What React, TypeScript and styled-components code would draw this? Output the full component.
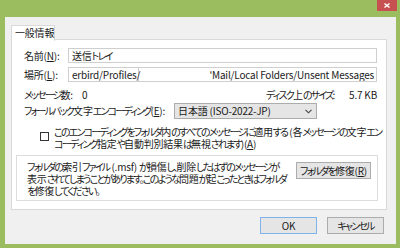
import React from "react";
import styled, { createGlobalStyle } from "styled-components";

const Global = createGlobalStyle`
  html, body { margin: 0; padding: 0; }
  body {
    background: #9bbd5f;
    font-family: "Noto Sans CJK JP", "Noto Sans", sans-serif;
    font-size: 10px;
    line-height: 12px;
    letter-spacing: -0.2px;
    color: #1a1a1a;
    font-feature-settings: "palt";
  }
  * { box-sizing: border-box; }
`;

/* Meiryo UI draws kana narrower than kanji: tighten kana runs only */
const KanaRun = styled.span`
  letter-spacing: -1.8px;
`;

function jp(s: string) {
  return s
    .split(/([\u3000-\u30ff\uff00-\uffef]+)/)
    .map((p, i) =>
      i % 2 === 1 ? <KanaRun key={i}>{p}</KanaRun> : p ? <React.Fragment key={i}>{p}</React.Fragment> : null
    );
}

const Frame = styled.div`
  position: relative;
  width: 400px;
  height: 248px;
  background: #9bbd5f;
  padding: 17px 4px 4px 5px;
`;

const CloseBtn = styled.div`
  position: absolute;
  top: 0;
  left: 377px;
  width: 20px;
  height: 11px;
  background: #c75050;
  display: flex;
  align-items: center;
  justify-content: center;
`;

const Client = styled.div`
  height: 227px;
  background: #f0f0f0;
  padding: 8px 9px 0 6px;
  display: flex;
  flex-direction: column;
`;

const TabStrip = styled.div`
  display: flex;
  height: 15px;
  position: relative;
  z-index: 1;
  margin-bottom: -1px;
`;

const Tab = styled.div`
  width: 44px;
  height: 16px;
  background: #fff;
  border: 1px solid #d9d9d9;
  border-bottom: none;
  padding: 1px 0 0 3px;
  white-space: nowrap;
`;

const Panel = styled.div`
  height: 171px;
  background: #fff;
  border: 1px solid #d9d9d9;
  padding: 8px 9px 0 12px;
  display: flex;
  flex-direction: column;
  white-space: nowrap;
`;

const Row = styled.div<{ $mt: number; $h: number }>`
  display: flex;
  align-items: center;
  margin-top: ${(p) => p.$mt}px;
  height: ${(p) => p.$h}px;
`;

const Label = styled.div<{ $w?: number }>`
  white-space: nowrap;
  ${(p) => (p.$w ? `width: ${p.$w}px; flex: none;` : "")}
`;

const TextBox = styled.div`
  flex: 1;
  height: 15px;
  border: 1px solid #cfcfcf;
  background: #fff;
  display: flex;
  align-items: center;
  padding: 0 2px 0 3px;
  overflow: hidden;
  white-space: nowrap;
`;

const LocLeft = styled.span`
  width: 67px;
  height: 100%;
  border-right: 1px solid #cfcfcf;
  display: flex;
  align-items: center;
  flex: none;
`;

const LocRight = styled.span`
  margin-left: auto;
`;

const Value = styled.div<{ $ml: number }>`
  margin-left: ${(p) => p.$ml}px;
  white-space: nowrap;
`;

const Spacer = styled.div`
  flex: 1;
`;

const Select = styled.div`
  margin-left: 9px;
  width: 143px;
  height: 16px;
  background: #e5e5e5;
  border: 1px solid #acacac;
  display: flex;
  align-items: center;
  padding: 0 4px 0 3px;
  white-space: nowrap;
`;

const Chevron = styled.svg`
  margin-left: auto;
`;

const CheckRow = styled.div`
  display: flex;
  align-items: flex-start;
  margin-top: 7px;
`;

const Box = styled.div`
  width: 9px;
  height: 9px;
  flex: none;
  border: 1px solid #333;
  background: #fff;
  margin: 6px 5px 0 16px;
`;

const CheckText = styled.div`
  line-height: 12px;
  white-space: nowrap;
`;

const Group = styled.div`
  margin: 5px -1px 0 -8px;
  height: 46px;
  border: 1px solid #dcdcdc;
  display: flex;
  align-items: flex-start;
  padding: 4px 6px 0 10px;
`;

const GroupText = styled.div`
  flex: 1;
  line-height: 12px;
  padding-top: 1px;
  white-space: nowrap;
`;

const Button = styled.div<{ $w: number; $default?: boolean }>`
  width: ${(p) => p.$w}px;
  height: 17px;
  flex: none;
  background: #e5e5e5;
  border: 1px solid ${(p) => (p.$default ? "#7eb4ea" : "#acacac")};
  display: flex;
  align-items: center;
  justify-content: center;
  white-space: nowrap;
`;

const FixBtn = styled(Button)`
  margin-top: 2px;
`;

const Footer = styled.div`
  display: flex;
  justify-content: flex-end;
  gap: 10px;
  margin-top: 7px;
  padding-right: 3px;
`;

export default function App() {
  return (
    <>
      <Global />
      <Frame>
        <CloseBtn>
          <svg width="6" height="5" viewBox="0 0 6 5">
            <path d="M0.5 0.5 L5.5 4.5 M5.5 0.5 L0.5 4.5" stroke="#fff" strokeWidth="1.4" />
          </svg>
        </CloseBtn>
        <Client>
          <TabStrip>
            <Tab>一般情報</Tab>
          </TabStrip>
          <Panel>
            <Row $mt={0} $h={15}>
              <Label $w={44}>
                名前(<u>N</u>):
              </Label>
              <TextBox>{jp("送信トレイ")}</TextBox>
            </Row>
            <Row $mt={4} $h={15}>
              <Label $w={44}>
                場所(<u>L</u>):
              </Label>
              <TextBox>
                <LocLeft>erbird/Profiles/</LocLeft>
                <LocRight>'Mail/Local Folders/Unsent Messages</LocRight>
              </TextBox>
            </Row>
            <Row $mt={6} $h={14}>
              <Label>{jp("メッセージ数:")}</Label>
              <Value $ml={9}>0</Value>
              <Spacer />
              <Label>{jp("ディスク上のサイズ:")}</Label>
              <Value $ml={14}>5.7 KB</Value>
            </Row>
            <Row $mt={1} $h={16}>
              <Label>
                {jp("フォールバック文字エンコーディング(")}
                <u>E</u>):
              </Label>
              <Select>
                日本語 (ISO-2022-JP)
                <Chevron width="7" height="5" viewBox="0 0 7 5">
                  <path d="M0.5 0.8 L3.5 3.8 L6.5 0.8" stroke="#444" strokeWidth="1.1" fill="none" />
                </Chevron>
              </Select>
            </Row>
            <CheckRow>
              <Box />
              <CheckText>
                {jp("このエンコーディングをフォルダ内のすべてのメッセージに適用する (各メッセージの文字エン")}
                <br />
                {jp("コーディング指定や自動判別結果は無視されます)(")}
                <u>A</u>)
              </CheckText>
            </CheckRow>
            <Group>
              <GroupText>
                {jp("フォルダの索引ファイル (.msf) が損傷し、削除したはずのメッセージが")}
                <br />
                {jp("表示されてしまうことがあります。このような問題が起こったときはフォルダ")}
                <br />
                {jp("を修復してください。")}
              </GroupText>
              <FixBtn $w={75}>
                {jp("フォルダを修復(")}
                <u>R</u>)
              </FixBtn>
            </Group>
          </Panel>
          <Footer>
            <Button $w={57} $default>
              OK
            </Button>
            <Button $w={57}>{jp("キャンセル")}</Button>
          </Footer>
        </Client>
      </Frame>
    </>
  );
}
